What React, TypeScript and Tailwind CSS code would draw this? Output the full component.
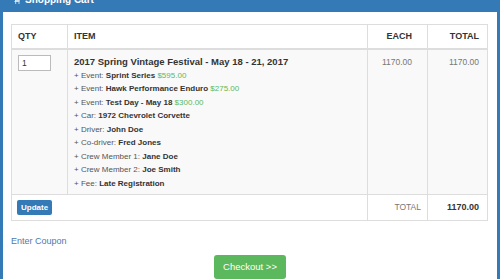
import React from "react";

type Line = { label: string; value: string; price?: string };

const lines: Line[] = [
  { label: "Event:", value: "Sprint Series", price: "$595.00" },
  { label: "Event:", value: "Hawk Performance Enduro", price: "$275.00" },
  { label: "Event:", value: "Test Day - May 18", price: "$300.00" },
  { label: "Car:", value: "1972 Chevrolet Corvette" },
  { label: "Driver:", value: "John Doe" },
  { label: "Co-driver:", value: "Fred Jones" },
  { label: "Crew Member 1:", value: "Jane Doe" },
  { label: "Crew Member 2:", value: "Joe Smith" },
  { label: "Fee:", value: "Late Registration" },
];

function CartIcon() {
  return (
    <svg width="8" height="8" viewBox="0 0 24 24" fill="white">
      <path d="M1 2h4l1 3h17l-3 9H8l-1 2h13v2H4l2.5-4.5L3.5 4H1z" />
      <circle cx="8" cy="21" r="2" />
      <circle cx="18" cy="21" r="2" />
    </svg>
  );
}

export default function App() {
  return (
    <div
      className="w-[500px] h-[279px] overflow-hidden bg-white border-x-[3px] border-[#337ab7] text-[#333]"
      style={{ fontFamily: '"Liberation Sans", Arial, sans-serif' }}
    >
      {/* panel heading, mostly scrolled off the top */}
      <div className="h-[12px] bg-[#337ab7] overflow-hidden">
        <div className="flex items-center gap-[4px] pl-[10px] -mt-[7px] text-white text-[10px] font-bold leading-[14px]">
          <CartIcon />
          <span>Shopping Cart</span>
        </div>
      </div>

      <div className="pl-[8px] pr-[6px] pt-[12px]">
        <table className="w-[477px] border-collapse border border-[#ddd] text-[9px] table-fixed">
          <colgroup>
            <col className="w-[56px]" />
            <col />
            <col className="w-[60px]" />
            <col className="w-[60px]" />
          </colgroup>
          <thead>
            <tr className="border-b-2 border-[#ddd]">
              <th className="border-r border-[#ddd] text-left font-bold px-[6px] py-[5px] leading-[13px]">QTY</th>
              <th className="border-r border-[#ddd] text-left font-bold px-[6px] py-[5px] leading-[13px]">ITEM</th>
              <th className="border-r border-[#ddd] text-right font-bold pl-[6px] pr-[15px] py-[5px] leading-[13px]">EACH</th>
              <th className="text-right font-bold px-[8px] py-[5px] leading-[13px]">TOTAL</th>
            </tr>
          </thead>
          <tbody>
            <tr className="bg-[#f9f9f9] border-b border-[#ddd] align-top">
              <td className="border-r border-[#ddd] px-[6px] pt-[5px] pb-[4px]">
                <div className="w-[33px] h-[16px] bg-white border border-[#bbb] text-[8.5px] leading-[14px] pl-[3px]">1</div>
              </td>
              <td className="border-r border-[#ddd] pl-[6px] pr-[6px] pt-[5px] pb-[4px]">
                <div className="font-bold text-[9.5px] leading-[13.5px]">
                  2017 Spring Vintage Festival - May 18 - 21, 2017
                </div>
                {lines.map((l, i) => (
                  <div key={i} className="text-[8px] leading-[13.5px] text-[#555]">
                    + {l.label} <span className="font-bold text-[#333]">{l.value}</span>
                    {l.price && <span className="text-[#5cb85c]"> {l.price}</span>}
                  </div>
                ))}
              </td>
              <td className="border-r border-[#ddd] text-right pl-[4px] pr-[15px] pt-[6px] text-[8.5px] leading-[13px] text-[#777]">1170.00</td>
              <td className="text-right px-[8px] pt-[6px] text-[8.5px] leading-[13px] text-[#777]">1170.00</td>
            </tr>
            <tr>
              <td colSpan={2} className="px-[5px] pt-[5px] pb-[5px]">
                <button className="h-[15px] px-[4px] rounded-[2px] bg-[#337ab7] text-white text-[8px] font-bold leading-[15px]">
                  Update
                </button>
              </td>
              <td className="border-x border-[#ddd] text-right px-[6px] text-[8.5px] text-[#777]">TOTAL</td>
              <td className="text-right px-[8px] text-[9px] font-bold">1170.00</td>
            </tr>
          </tbody>
        </table>

        <div className="mt-[14px] text-[9px] leading-[12px] text-[#4a7bb0]">Enter Coupon</div>

        <div className="flex justify-center pl-[2px] pr-[4px] mt-[8px]">
          <button className="w-[72px] h-[24px] rounded-[3px] bg-[#5cb85c] text-white text-[9.5px] leading-[24px]">
            Checkout &gt;&gt;
          </button>
        </div>
      </div>
    </div>
  );
}
